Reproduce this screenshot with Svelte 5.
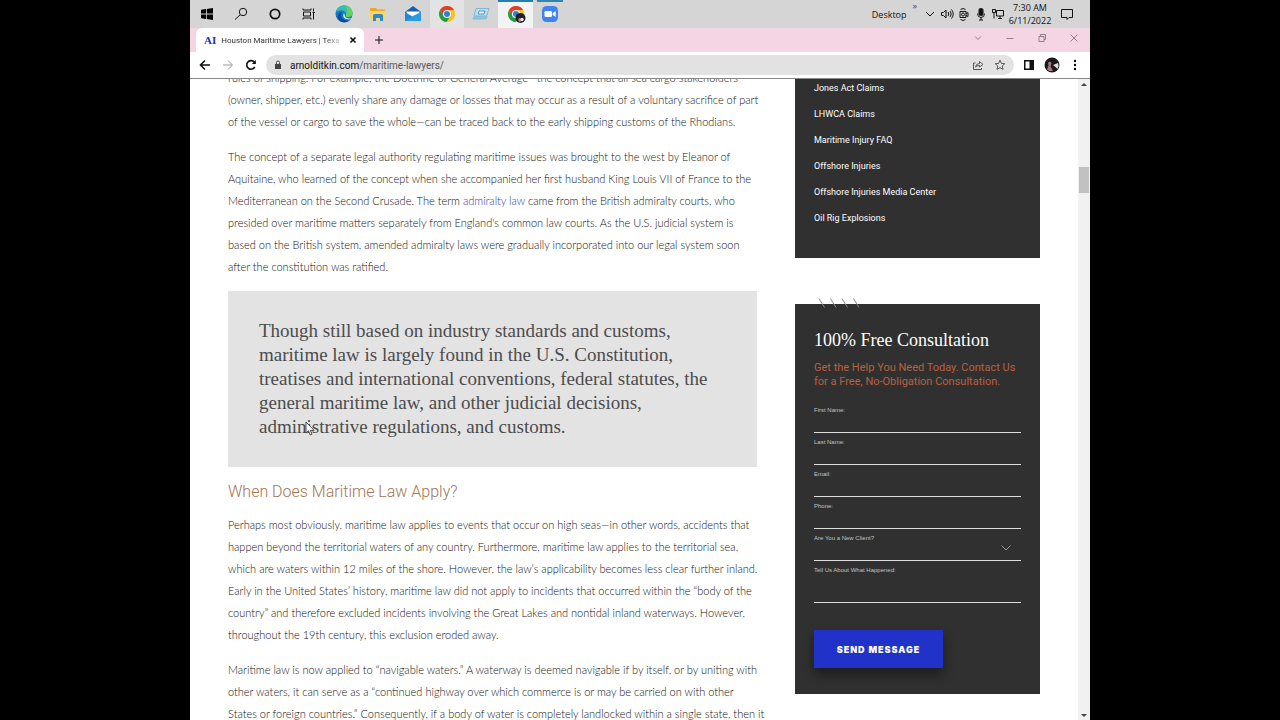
<script lang="ts">
	const opening = [
		`rules of shipping. For example, the Doctrine of General Average—the concept that all sea cargo stakeholders
(owner, shipper, etc.) evenly share any damage or losses that may occur as a result of a voluntary sacrifice of part
of the vessel or cargo to save the whole—can be traced back to the early shipping customs of the Rhodians.`
	];

	const quote = `Though still based on industry standards and customs,
maritime law is largely found in the U.S. Constitution,
treatises and international conventions, federal statutes, the
general maritime law, and other judicial decisions,
administrative regulations, and customs.`;

	const closing = [
		`Perhaps most obviously, maritime law applies to events that occur on high seas—in other words, accidents that
happen beyond the territorial waters of any country. Furthermore, maritime law applies to the territorial sea,
which are waters within 12 miles of the shore. However, the law’s applicability becomes less clear further inland.
Early in the United States’ history, maritime law did not apply to incidents that occurred within the “body of the
country” and therefore excluded incidents involving the Great Lakes and nontidal inland waterways. However,
throughout the 19th century, this exclusion eroded away.`,
		`Maritime law is now applied to “navigable waters.” A waterway is deemed navigable if by itself, or by uniting with
other waters, it can serve as a “continued highway over which commerce is or may be carried on with other
States or foreign countries.” Consequently, if a body of water is completely landlocked within a single state, then it`
	];

	const links = [
		'Jones Act Claims',
		'LHWCA Claims',
		'Maritime Injury FAQ',
		'Offshore Injuries',
		'Offshore Injuries Media Center',
		'Oil Rig Explosions'
	];

	const fields = [
		{ id: 'first', label: 'First Name:', type: 'text' },
		{ id: 'last', label: 'Last Name:', type: 'text' },
		{ id: 'email', label: 'Email:', type: 'email' },
		{ id: 'phone', label: 'Phone:', type: 'tel' }
	];
</script>

{#snippet chromeLogo()}
	<circle cx="10" cy="10" r="8" fill="#fbc116" />
	<path d="M3.1 6A8 8 0 0 1 17 6H10L6.5 12Z" fill="#e33b2e" />
	<path d="M3.1 6A8 8 0 0 0 9.5 18L13.5 12L6.5 12Z" fill="#229b48" />
	<circle cx="10" cy="10" r="4" fill="#fff" />
	<circle cx="10" cy="10" r="3" fill="#2d7de0" />
{/snippet}

<div class="desktop">
	<header class="taskbar">
		<nav class="apps" aria-label="Taskbar">
			<button aria-label="Start">
				<svg width="20" height="20" viewBox="0 0 20 20">
					<path d="M4 5.7L9 5v4.6H4zM9.8 4.9L16 4v5.6H9.8zM4 10.4h5V15l-5-.7zM9.8 10.4H16V16l-6.2-.9z" />
				</svg>
			</button>
			<button aria-label="Search">
				<svg width="20" height="20" viewBox="0 0 20 20" class="line">
					<circle cx="12" cy="8" r="3.7" /><path d="M9.3 10.7L4 15.5" />
				</svg>
			</button>
			<button aria-label="Cortana">
				<svg width="20" height="20" viewBox="0 0 20 20" class="line">
					<circle cx="9" cy="10" r="4.7" stroke-width="1.7" />
				</svg>
			</button>
			<button aria-label="Task View">
				<svg width="20" height="20" viewBox="0 0 20 20" class="line">
					<path d="M3 4.5V6h8V4.5M3 15.5V14h8v1.5M3.5 8h7v4h-7zM13.5 4.5v3M13.5 9v6.5M12.5 8.5h2.5" />
				</svg>
			</button>
			<button aria-label="Edge">
				<svg width="20" height="20" viewBox="0 0 20 20">
					<circle cx="10" cy="10" r="8.5" fill="#1278c8" />
					<path d="M2 8C3 3.5 7 1.5 10 1.5C15 1.5 18.5 5 18.5 9C18.5 12 16 13 14 13C12 13 11.5 12 12 11C12.5 8 10 6.5 7.5 6.5C5 6.5 3 7 2 8Z" fill="#35bfa9" />
					<path d="M12 2C16 3 18.5 6 18.5 9C18.5 12 16 13 14 13C12 13 11.5 12 12 11C13 8 14 5 12 2Z" fill="#65d35b" />
					<path d="M8 8C6 11 7 16 13 16.5C15 16.5 16 16 17 15C14 19 8 19.5 5 16C3 13 4 9 8 8Z" fill="#0b4b97" />
					<path d="M10 9C8 12 10 15.5 15 15.5L17.5 14C16 14.5 12 15 11 12Z" fill="#d9e8ee" />
				</svg>
			</button>
			<button aria-label="File Explorer">
				<svg width="20" height="20" viewBox="0 0 20 20">
					<path d="M2 4h6l1.5 1.5H17V16H2z" fill="#e9a927" />
					<path d="M2 7h16v9H2z" fill="#fbd667" />
					<path d="M5 17v-5.500q0-1.500 1.500-1.500h7q1.500 0 1.500 1.500V17h-3v-3H8v3z" fill="#318ac7" />
				</svg>
			</button>
			<button aria-label="Mail">
				<svg width="20" height="20" viewBox="0 0 20 20">
					<path d="M2 8L10 2L18 8V17H2z" fill="#1262ae" />
					<path d="M3.5 7.5h13V10L10 14L3.5 10z" fill="#fff" />
					<path d="M2 8L10 13L2 17z" fill="#2588d0" /><path d="M18 8V17H2L10 12z" fill="#2b9ae0" />
				</svg>
			</button>
			<button class="running" aria-label="Chrome">
				<svg width="20" height="20" viewBox="0 0 20 20">{@render chromeLogo()}</svg>
			</button>
			<button aria-label="Remote desktop">
				<svg width="20" height="20" viewBox="0 0 20 20">
					<path d="M5 4.5H18L15.5 12H3z" fill="#bfe0f2" stroke="#83b6d5" />
					<path d="M3 12.5h13l-1 2.5H2z" fill="#8cc2e2" stroke="#8cbcd8" />
					<path d="M8 7h6l-1 3H7z" fill="#e9f6fc" stroke="#4e96c4" />
				</svg>
			</button>
			<button class="running current" aria-label="Chrome, profile window">
				<svg width="20" height="20" viewBox="0 0 20 20">
					{@render chromeLogo()}
					<circle cx="14.5" cy="14" r="5" fill="#211d20" />
					<path d="M12 16q2-4 3 0l-1 2.500z" fill="#b8868f" />
					<circle cx="16" cy="15.5" r="1.7" fill="#eee" />
				</svg>
			</button>
			<button class="open" aria-label="Zoom">
				<svg width="20" height="20" viewBox="0 0 20 20">
					<rect x="2" y="2" width="16" height="16" rx="4.5" fill="#4284ef" />
					<rect x="4.5" y="7" width="7.5" height="6" rx="1.2" fill="#fff" />
					<path d="M12.7 9l3-2v6l-3-2z" fill="#fff" />
				</svg>
			</button>
		</nav>
		<div class="tray">
			<span>Desktop</span>
			<span class="more">»</span>
			<svg width="14" height="14" viewBox="0 0 14 14" class="line"><path d="M3 5l4 4 4-4" /></svg>
			<svg width="14" height="14" viewBox="0 0 14 14" class="line">
				<path d="M1.5 5.5v3h2L6 11V3L3.5 5.5zM8 5q1.500 2 0 4M10 4q2.500 3 0 6M11.500 2.500q3.500 4.500 0 9" />
			</svg>
			<svg width="14" height="14" viewBox="0 0 14 14" class="line">
				<path d="M3 4.500h6v6H3zM9 6.500l2-1v4l-2-1M3.500 2.500q2.500-2 5 0M3.500 12.500q2.500 2 5 0" /><circle cx="6" cy="7.5" r="1.5" />
			</svg>
			<svg width="14" height="14" viewBox="0 0 14 14" class="line">
				<rect x="5" y="1.5" width="4" height="7" rx="1.5" fill="#111" /><path d="M3.500 6.500q0 4 3.500 4t3.500-4M7 10.500v2.500M5 13h4" />
			</svg>
			<svg width="14" height="14" viewBox="0 0 14 14" class="line">
				<path d="M5.500 3.500h7v5.500h-7zM7 11.500h4M9 9v2.500M1.500 2.500h3v3h-3zM3 5.500v6" />
			</svg>
			<time>7:30 AM<br />6/11/2022</time>
			<svg width="14" height="14" viewBox="0 0 14 14" class="line">
				<path d="M1.500 2.500h11v8H9L7 12.500V10.500H1.500z" />
			</svg>
		</div>
	</header>

	<div class="tabstrip">
		<div class="tab">
			<span class="favicon">AI</span>
			<span class="tab-title">Houston Maritime Lawyers | Texa</span>
			<button aria-label="Close tab">
				<svg width="8" height="8" viewBox="0 0 8 8" class="line bold"><path d="M1.500 1.500l5 5M6.500 1.500l-5 5" /></svg>
			</button>
		</div>
		<button aria-label="New tab">
			<svg width="10" height="10" viewBox="0 0 10 10" class="line"><path d="M5 1v8M1 5h8" /></svg>
		</button>
		<div class="window-controls">
			<button aria-label="Tab search">
				<svg width="10" height="10" viewBox="0 0 10 10"><path d="M2 3.500l3 3 3-3" /></svg>
			</button>
			<button aria-label="Minimize">
				<svg width="10" height="10" viewBox="0 0 10 10"><path d="M1.500 5.500h7" /></svg>
			</button>
			<button aria-label="Restore">
				<svg width="10" height="10" viewBox="0 0 10 10"><path d="M2 3.500h5v5H2zM3.500 3.500V1.500h5v5H7" /></svg>
			</button>
			<button aria-label="Close">
				<svg width="10" height="10" viewBox="0 0 10 10"><path d="M1.500 1.500l7 7M8.500 1.500l-7 7" /></svg>
			</button>
		</div>
	</div>

	<div class="toolbar">
		<div class="history">
			<button aria-label="Back">
				<svg width="12" height="12" viewBox="0 0 12 12" class="line bold"><path d="M11 6H2M6 1.500L1.500 6L6 10.500" /></svg>
			</button>
			<button class="forward" aria-label="Forward">
				<svg width="12" height="12" viewBox="0 0 12 12" class="line"><path d="M1 6h9M6 1.500L10.500 6L6 10.500" /></svg>
			</button>
			<button aria-label="Reload">
				<svg width="12" height="12" viewBox="0 0 12 12" class="line bold"><path d="M9.800 8A4.300 4.300 0 1 1 9 2.800L10.300 4.200" /><path d="M10.800 1v4h-4z" fill="#111" stroke="none" /></svg>
			</button>
		</div>
		<div class="omnibox">
			<svg width="8" height="10" viewBox="0 0 8 10"><path d="M1 4h6v5H1z" fill="#444" /><path d="M2.500 4V2.500q0-1.500 1.500-1.500t1.500 1.500V4" fill="none" stroke="#444" /></svg>
			<span class="url">arnolditkin.com<span>/maritime-lawyers/</span></span>
			<button aria-label="Share">
				<svg width="12" height="12" viewBox="0 0 12 12"><path d="M3.500 4H1.500v6.500h8V9M3.500 8q.5-3.500 4-3.500V2.500L11 5.500L7.500 8V6.500Q5 6.500 3.500 8z" /></svg>
			</button>
			<button aria-label="Bookmark">
				<svg width="12" height="12" viewBox="0 0 12 12"><path d="M6 1.200l1.400 3.200 3.400.3-2.600 2.300.8 3.400-3-1.800-3 1.800.8-3.400L1.200 4.700l3.400-.3z" /></svg>
			</button>
		</div>
		<button aria-label="Side panel">
			<svg width="12" height="12" viewBox="0 0 12 12"><path d="M1 1h10v10H1zM2.500 2.500v7h4v-7z" fill="#111" fill-rule="evenodd" /></svg>
		</button>
		<button aria-label="Profile">
			<svg width="16" height="16" viewBox="0 0 16 16">
				<circle cx="8" cy="8" r="7.5" fill="#1c191b" />
				<path d="M4 5.500q3-2 3.500 1l-1 3 2.500 4q-3 2-6-1l1.500-4z" fill="#a9757d" />
				<path d="M9 8l5-2q1.500 3-.5 6l-2-2z" fill="#ddd" />
			</svg>
		</button>
		<button aria-label="Menu">
			<svg width="12" height="12" viewBox="0 0 12 12"><circle cx="6" cy="2" r="1.2" /><circle cx="6" cy="6" r="1.2" /><circle cx="6" cy="10" r="1.2" /></svg>
		</button>
	</div>

	<div class="viewport">
		<div class="page">
			<main>
				{#each opening as text}
					<p>{text}</p>
				{/each}
				<p>The concept of a separate legal authority regulating maritime issues was brought to the west by Eleanor of<br
					/>Aquitaine, who learned of the concept when she accompanied her first husband King Louis VII of France to the<br
					/>Mediterranean on the Second Crusade. The term <a href="#admiralty">admiralty law</a> came from the British admiralty courts, who<br
					/>presided over maritime matters separately from England's common law courts. As the U.S. judicial system is<br
					/>based on the British system, amended admiralty laws were gradually incorporated into our legal system soon<br
					/>after the constitution was ratified.</p>
				<blockquote>
					{quote}
					<svg class="cursor" width="10" height="16" viewBox="0 0 10 16" aria-hidden="true">
						<path d="M1 1v11l2.500-2.300L5.200 14l1.800-.8L5.300 9.300H9z" fill="#fff" stroke="#222" stroke-width=".8" />
					</svg>
				</blockquote>
				<h2>When Does Maritime Law Apply?</h2>
				{#each closing as text}
					<p>{text}</p>
				{/each}
			</main>

			<aside>
				<ul class="card">
					{#each links as link}
						<li><a href="#{link.toLowerCase().replaceAll(' ', '-')}">{link}</a></li>
					{/each}
				</ul>

				<form class="card">
					<svg class="slashes" width="42" height="10" viewBox="0 0 42 10" aria-hidden="true">
						<path d="M1 .5l5.500 9M12.500.5l5.500 9M24 .5l5.500 9M35.500.5l5.500 9" />
					</svg>
					<h3>100% Free Consultation</h3>
					<p>Get the Help You Need Today. Contact Us<br />for a Free, No-Obligation Consultation.</p>
					{#each fields as field}
						<div class="field">
							<label for={field.id}>{field.label}</label>
							<input id={field.id} type={field.type} />
						</div>
					{/each}
					<div class="field">
						<label for="client">Are You a New Client?</label>
						<select id="client"><option></option></select>
						<svg class="chevron" width="10" height="6" viewBox="0 0 10 6" aria-hidden="true"><path d="M.5.5L5 5L9.500.5" /></svg>
					</div>
					<div class="field message">
						<label for="message">Tell Us About What Happened:</label>
						<textarea id="message"></textarea>
					</div>
					<button class="send">SEND MESSAGE</button>
				</form>
			</aside>
		</div>

		<div class="scrollbar" aria-hidden="true">
			<svg width="12" height="10" viewBox="0 0 12 10"><path d="M3 7l3-3 3 3z" /></svg>
			<div class="thumb"></div>
			<svg width="12" height="10" viewBox="0 0 12 10"><path d="M3 4l3 3 3-3z" /></svg>
		</div>
	</div>
</div>

<style>
	:global(body) {
		background: #000;
	}

	.desktop {
		display: flex;
		flex-direction: column;
		max-width: 900px;
		height: 100vh;
		margin: 0 auto;
		overflow: hidden;
		background: #fff;
		font-family: 'Open Sans', 'Noto Sans', sans-serif;
		font-size: 9px;
		color: #111;
	}

	button {
		display: flex;
		align-items: center;
		justify-content: center;
		padding: 0;
		border: 0;
		background: none;
		flex-shrink: 0;
	}

	svg {
		flex-shrink: 0;
	}

	.line {
		fill: none;
		stroke: #111;
	}

	.bold {
		stroke-width: 1.6;
	}

	.taskbar {
		display: flex;
		justify-content: space-between;
		height: 28px;
		background: #d5d5d5;
		flex-shrink: 0;
	}

	.apps {
		display: grid;
		grid-template-columns: repeat(11, 1fr);
		width: 377px;
	}

	.running {
		background: #e3e3e3;
	}

	.current {
		background: #f3f3f3;
		box-shadow: inset 0 2px #2380ae;
	}

	.open {
		background: linear-gradient(#2f86b2, #2f86b2) center top / 26px 2px no-repeat;
	}

	.tray {
		display: flex;
		align-items: center;
		gap: 3px;
		padding-right: 16px;
	}

	.more {
		align-self: flex-start;
		margin: 0 3px;
		line-height: 12px;
		color: #446;
	}

	time {
		width: 44px;
		text-align: center;
		line-height: 13px;
		margin-right: 5px;
	}

	.tabstrip {
		display: flex;
		align-items: center;
		height: 24px;
		padding-left: 6px;
		background: #f5d5e3;
		flex-shrink: 0;
	}

	.tab {
		display: flex;
		align-items: center;
		gap: 5px;
		width: 153px;
		height: 24px;
		padding: 0 7px 0 8px;
		margin-right: 10px;
		border-radius: 6px 6px 0 0;
		background: #fff;
	}

	.favicon {
		font-family: 'Liberation Serif', serif;
		font-size: 11px;
		font-weight: 700;
		color: #2330b8;
	}

	.tab-title {
		flex: 1;
		overflow: hidden;
		white-space: nowrap;
		font-family: Roboto, sans-serif;
		font-size: 8px;
		color: #333;
		mask-image: linear-gradient(to right, #000 85%, transparent);
	}

	.window-controls {
		display: flex;
		gap: 22px;
		padding-right: 11px;
		margin-left: auto;
		align-self: flex-start;
	}

	.window-controls button {
		height: 20px;
	}

	.window-controls path {
		fill: none;
		stroke: #947e89;
	}

	.toolbar {
		display: flex;
		align-items: center;
		gap: 9px;
		height: 26px;
		padding: 0 9px;
		border-bottom: 1px solid #888;
		flex-shrink: 0;
	}

	.history {
		display: flex;
		gap: 11px;
	}

	.forward .line {
		stroke: #999;
	}

	.omnibox {
		display: flex;
		align-items: center;
		flex: 1;
		gap: 8px;
		height: 20px;
		padding: 0 8px;
		border-radius: 10px;
		background: #e2e2e2;
	}

	.omnibox button path {
		fill: none;
		stroke: #555;
	}

	.omnibox button {
		margin-left: 2px;
	}

	.url {
		flex: 1;
		font-family: Roboto, sans-serif;
		font-size: 10px;
	}

	.url span {
		color: #555;
	}

	.viewport {
		display: flex;
		flex: 1;
		min-height: 0;
		font-family: Roboto, 'Liberation Sans', sans-serif;
		overflow: hidden;
	}

	/* The page is scrolled so that the first line sits half under the toolbar. */
	.page {
		display: grid;
		grid-template-columns: minmax(0, 529fr) minmax(0, 245fr);
		align-items: start;
		gap: 38px;
		flex: 1;
		padding: 0 38px;
		margin-top: -12px;
	}

	main {
		font-family: Lato, sans-serif;
		font-size: 11px;
		font-weight: 300;
		line-height: 22px;
		color: #111;
	}

	main p {
		margin: 0 0 13px;
		white-space: pre;
	}

	main a {
		color: #2b3aa8;
		text-decoration: none;
	}

	blockquote {
		position: relative;
		padding: 28px 31px;
		margin: 0 0 14px;
		background: #e3e3e4;
		font-family: 'Liberation Serif', serif;
		font-size: 19px;
		line-height: 24px;
		white-space: pre-line;
		color: #4c4c4c;
	}

	.cursor {
		position: absolute;
		left: 77px;
		top: 130px;
	}

	h2 {
		margin: 0 0 11px;
		font-family: Roboto, sans-serif;
		font-size: 16px;
		font-weight: 300;
		line-height: 22px;
		color: #a37551;
	}

	.card {
		margin: 0;
		background: #303030;
		color: #fff;
	}

	ul {
		padding: 8px 19px 27px;
		list-style: none;
		font-size: 9px;
		line-height: 26px;
	}

	li a {
		color: #fff;
		text-decoration: none;
	}

	form {
		position: relative;
		padding: 24px 19px 26px;
	}

	form.card {
		margin-top: 46px;
	}

	.slashes {
		position: absolute;
		left: 23px;
		top: -6px;
		fill: none;
		stroke: #8b8880;
	}

	h3 {
		margin: 0 0 9px;
		font-family: 'Liberation Serif', serif;
		font-size: 18px;
		font-weight: 400;
		line-height: 24px;
	}

	form p {
		margin: 0 0 15px;
		font-size: 11px;
		line-height: 14px;
		white-space: nowrap;
		color: #b9603f;
	}

	.field {
		position: relative;
		display: flex;
		flex-direction: column;
		height: 32px;
	}

	.field label {
		font-family: 'Liberation Sans', sans-serif;
		font-size: 6px;
		line-height: 12px;
		color: #c4c4c4;
	}

	.field input,
	.field select,
	.field textarea {
		height: 17px;
		box-sizing: border-box;
		padding: 0;
		border: 0;
		border-bottom: 1px solid #ddd;
		border-radius: 0;
		background: none;
		color: #fff;
		appearance: none;
		resize: none;
	}

	.field textarea {
		height: 27px;
	}

	.chevron {
		position: absolute;
		right: 10px;
		top: 13px;
		fill: none;
		stroke: #999;
	}

	.field.message {
		height: 66px;
	}

	.send {
		width: 129px;
		height: 38px;
		background: #2032c8;
		box-shadow: 0 6px 12px rgb(0 0 0 / 45%);
		font-family: Inter, sans-serif;
		font-size: 9px;
		font-weight: 900;
		letter-spacing: 1px;
		color: #fff;
	}

	.scrollbar {
		display: flex;
		flex-direction: column;
		justify-content: space-between;
		width: 12px;
		background: #f1f1f1;
		flex-shrink: 0;
	}

	.scrollbar svg {
		fill: #444;
	}

	.thumb {
		height: 26px;
		margin: 78px 1px auto;
		background: #c1c1c1;
	}
</style>
